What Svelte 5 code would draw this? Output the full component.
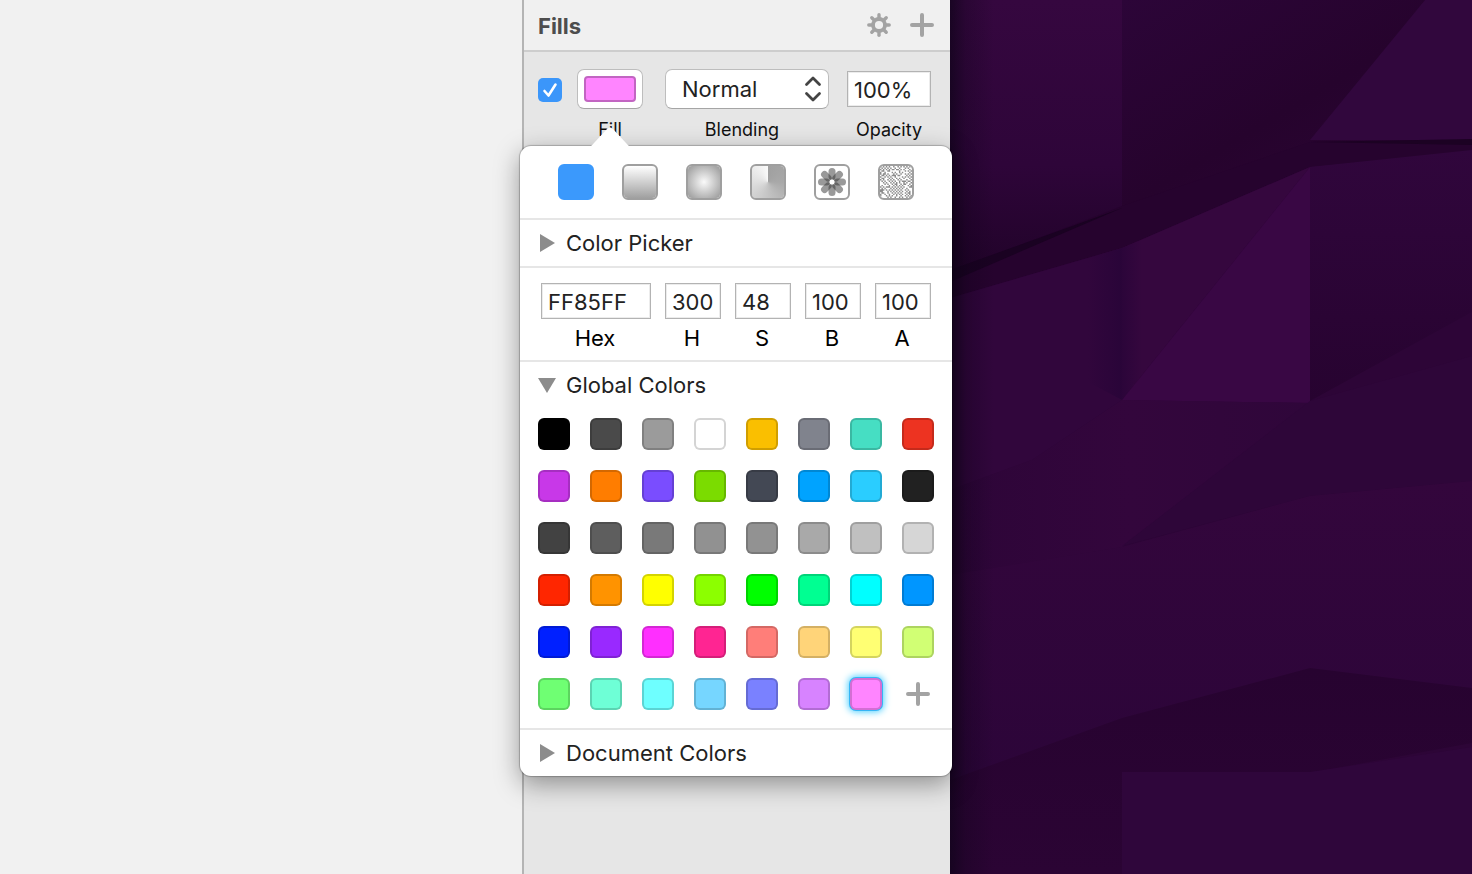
<script>
  const palette = [
    '#000000', '#4a4a4a', '#9b9b9b', '#ffffff', '#fabf00', '#80838d', '#46dec3', '#ed3321',
    '#c838e8', '#ff7d00', '#7a4dff', '#7bdc00', '#434854', '#00a3ff', '#2acdff', '#212121',
    '#424242', '#5e5e5e', '#797979', '#919191', '#929292', '#a9a9a9', '#c0c0c0', '#d6d6d6',
    '#ff2600', '#ff9300', '#ffff00', '#8cff00', '#00ff00', '#00ff92', '#00ffff', '#0096ff',
    '#0020ff', '#9929ff', '#ff2fff', '#ff2592', '#ff7e79', '#ffd479', '#ffff73', '#d1ff74',
    '#6fff73', '#6effd6', '#6effff', '#76d6ff', '#7a81ff', '#d783ff', '#ff85ff'
  ];

  let selected = $state(palette.length - 1);
  let fillEnabled = $state(true);
  let opacity = $state('100%');

  const channels = $state([
    { id: 'hex', label: 'Hex', value: 'FF85FF' },
    { id: 'hue', label: 'H', value: '300' },
    { id: 'sat', label: 'S', value: '48' },
    { id: 'bri', label: 'B', value: '100' },
    { id: 'alpha', label: 'A', value: '100' }
  ]);

  const petals = [0, 45, 90, 135, 180, 225, 270, 315];

  // Grain for the noise fill: dark cells of a 22 x 22 grid that seldom touch side by side.
  const grain = (() => {
    let seed = 7;
    let d = '';
    let above = [];
    for (let y = 0; y < 22; y++) {
      const row = [];
      for (let x = 0; x < 22; x++) {
        seed = (seed * 48271) % 2147483647;
        const touches = row[x - 1] || above[x];
        row[x] = seed / 2147483647 < (touches ? 0.14 : 0.78);
        if (row[x]) d += `M${x} ${y}h1v1h-1z`;
      }
      above = row;
    }
    return d;
  })();
</script>

{#snippet plus()}
  <svg class="icon" viewBox="0 0 24 24" aria-hidden="true">
    <path d="M12 2v20M2 12h20" fill="none" stroke="currentColor" stroke-width="4" stroke-linecap="round" />
  </svg>
{/snippet}

<div class="page">
  <main class="canvas"></main>

  <aside class="inspector">
    <header class="bar">
      <h2>Fills</h2>
      <button class="plain" aria-label="Fill settings">
        <svg class="icon" viewBox="0 0 24 24" aria-hidden="true">
          <g stroke="currentColor" stroke-width="3.4" stroke-linecap="round">
            {#each petals as a}
              <path d="M12 5V1.800" transform="rotate({a} 12 12)" />
            {/each}
          </g>
          <circle cx="12" cy="12" r="6" fill="none" stroke="currentColor" stroke-width="3.8" />
        </svg>
      </button>
      <button class="plain" aria-label="Add fill">{@render plus()}</button>
    </header>

    <section class="fill-row">
      <label class="check">
        <input type="checkbox" bind:checked={fillEnabled} aria-label="Fill enabled" />
        <svg viewBox="0 0 24 24" aria-hidden="true">
          <path d="M6.500 13l4 4.500L17.500 6.500" fill="none" stroke="#fff" stroke-width="2.600" stroke-linecap="round" stroke-linejoin="round" />
        </svg>
      </label>
      <div class="field fill">
        <button id="fill-color" class="well"><span style:background={palette[selected]}></span></button>
        <label for="fill-color">Fill</label>
      </div>
      <div class="field blending">
        <div class="select">
          <select id="blending">
            <option>Normal</option>
            <option>Darken</option>
            <option>Multiply</option>
          </select>
          <svg viewBox="0 0 18 26" aria-hidden="true">
            <path d="M2.500 8.500L9 2l6.500 6.500M2.500 17.500L9 24l6.500-6.500" fill="none" stroke="#444" stroke-width="2.800" stroke-linecap="round" stroke-linejoin="round" />
          </svg>
        </div>
        <label for="blending">Blending</label>
      </div>
      <div class="field opacity">
        <input id="opacity" class="box" type="text" bind:value={opacity} />
        <label for="opacity">Opacity</label>
      </div>
    </section>

    <div class="popover">
      <svg class="arrow" viewBox="0 0 44 20" aria-hidden="true">
        <path d="M0 20C3 20 4 18 6 16L19 2Q22 -1 25 2L38 16C40 18 41 20 44 20Z" fill="#fff" />
      </svg>

      <div class="types">
        <button class="type solid" aria-label="Solid color"></button>
        <button class="type linear" aria-label="Linear gradient"></button>
        <button class="type radial" aria-label="Radial gradient"></button>
        <button class="type angular" aria-label="Angular gradient"></button>
        <button class="type" aria-label="Pattern fill">
          <svg viewBox="0 0 32 32" aria-hidden="true">
            {#each petals as a}
              <rect x="12.500" y="2" width="7" height="12" rx="3.500" fill="#333" fill-opacity=".5" transform="rotate({a} 16 16)" />
            {/each}
            <circle cx="16" cy="16" r="2.500" fill="#fff" />
          </svg>
        </button>
        <button class="type" aria-label="Noise fill">
          <svg viewBox="0 0 22 22" aria-hidden="true">
            <path d={grain} fill="#8c8c8c" />
          </svg>
        </button>
      </div>

      <section>
        <button class="heading" aria-expanded="false">
          <svg viewBox="0 0 18 18" aria-hidden="true"><path d="M2 0l15 9L2 18z" fill="#8c8c8c" /></svg>
          Color Picker
        </button>
      </section>

      <section class="channels">
        {#each channels as c (c.id)}
          <div class="channel">
            <input id={c.id} class="box" type="text" bind:value={c.value} />
            <label for={c.id}>{c.label}</label>
          </div>
        {/each}
      </section>

      <section>
        <button class="heading" aria-expanded="true">
          <svg viewBox="0 0 18 18" aria-hidden="true"><path d="M0 2h18L9 17z" fill="#8c8c8c" /></svg>
          Global Colors
        </button>
        <div class="swatches">
          {#each palette as color, i}
            <button
              class="swatch"
              class:selected={i === selected}
              style:background-color={color}
              aria-label={color}
              onclick={() => (selected = i)}
            ></button>
          {/each}
          <button class="plain add" aria-label="Add color">{@render plus()}</button>
        </div>
      </section>

      <section>
        <button class="heading" aria-expanded="false">
          <svg viewBox="0 0 18 18" aria-hidden="true"><path d="M2 0l15 9L2 18z" fill="#8c8c8c" /></svg>
          Document Colors
        </button>
      </section>
    </div>
  </aside>

  <svg class="wallpaper" viewBox="950 0 522 874" preserveAspectRatio="none" aria-hidden="true">
    <defs>
      <linearGradient id="edge" x1="0" x2="1" y1="0" y2="0">
        <stop offset="0" stop-color="#10041a" stop-opacity=".75" />
        <stop offset=".35" stop-color="#10041a" stop-opacity=".3" />
        <stop offset="1" stop-color="#10041a" stop-opacity="0" />
      </linearGradient>
      <linearGradient id="panel" x1="0" x2="0" y1="0" y2="1">
        <stop offset="0" stop-color="#35073f" />
        <stop offset=".6" stop-color="#2e0539" />
        <stop offset="1" stop-color="#210329" />
      </linearGradient>
      <linearGradient id="fold" x1="0" x2="1" y1="0" y2="1">
        <stop offset="0" stop-color="#2c0538" />
        <stop offset=".5" stop-color="#26032d" />
        <stop offset="1" stop-color="#2d0536" />
      </linearGradient>
      <linearGradient id="right" x1="0" x2="0" y1="0" y2="1">
        <stop offset="0" stop-color="#30063c" />
        <stop offset="1" stop-color="#270330" />
      </linearGradient>
      <linearGradient id="crease" x1="0" x2="1" y1="0" y2="0">
        <stop offset="0" stop-color="#280438" stop-opacity="0" />
        <stop offset=".6" stop-color="#280438" stop-opacity=".8" />
        <stop offset="1" stop-color="#280438" stop-opacity="0" />
      </linearGradient>
      <linearGradient id="mid" x1="0" x2="1" y1="0" y2="0">
        <stop offset="0" stop-color="#2d0538" />
        <stop offset=".5" stop-color="#33063c" />
        <stop offset="1" stop-color="#2f063a" />
      </linearGradient>
      <linearGradient id="low" x1="0" x2="0" y1="0" y2="1">
        <stop offset="0" stop-color="#33063c" />
        <stop offset="1" stop-color="#2c0539" />
      </linearGradient>
      <linearGradient id="base" x1="0" x2="0" y1="0" y2="1">
        <stop offset="0" stop-color="#270330" />
        <stop offset="1" stop-color="#2b0434" />
      </linearGradient>
    </defs>
    <rect x="950" width="522" height="874" fill="#2d0537" />
    <path d="M950 0h172v208L950 275z" fill="url(#panel)" />
    <path d="M1122 0h350v140l-162 3-188 65z" fill="url(#fold)" />
    <path d="M1425 0h47v140h-162z" fill="#31073d" />
    <path d="M950 272l172-66 188-64 162-2v12l-162 15-188 81-172 50z" fill="#26032e" />
    <path d="M950 270l172-62L950 282z" fill="#1a0222" />
    <path d="M1310 142l162-3v6z" fill="#1c0223" />
    <path d="M950 298l172-50v152l-90 60-82 30z" fill="#31063c" />
    <path d="M1122 248l188-81-188 233z" fill="#35073e" />
    <path d="M1310 167v236l-188-3z" fill="#390744" />
    <path d="M1088 258l34-10 20-8v134l-20 26-34-18z" fill="url(#crease)" />
    <path d="M1310 167l162-17v162l-162 89z" fill="url(#right)" />
    <path d="M1122 400l188 3-188 144-172 28v-85l82-30z" fill="url(#mid)" />
    <path d="M1310 401l162-45v125l-162 15-188 50z" fill="#2e0639" />
    <path d="M950 575l172-28 188-51 162-15v210l-162-22-188 52-172 60z" fill="url(#low)" />
    <path d="M950 780l172-62 188-50 162 20v55l-162 30-188-1v102H950z" fill="url(#base)" />
    <path d="M1122 772h188l162-25v127h-350z" fill="#2f063b" />
    <rect x="950" width="44" height="874" fill="url(#edge)" />
  </svg>
</div>

<style>
  :global(body) {
    margin: 0;
  }

  .page {
    display: grid;
    grid-template-columns: minmax(0, 1fr) 428px minmax(0, 1fr);
    min-height: 100vh;
    font-family: Inter, 'Liberation Sans', sans-serif;
    font-size: 22px;
    color: #222;
    overflow: hidden;
  }

  button,
  input,
  select {
    box-sizing: border-box;
    margin: 0;
    padding: 0;
    font: inherit;
    color: inherit;
  }

  .canvas {
    background: #f1f1f1;
  }

  .inspector {
    position: relative;
    z-index: 1;
    border-left: 2px solid #b4b4b4;
    background: #e6e6e6;
  }

  .wallpaper {
    display: block;
    width: 100%;
    height: 100%;
  }

  .bar {
    display: flex;
    align-items: center;
    gap: 19px;
    height: 50px;
    padding: 0 16px 0 14px;
    border-bottom: 2px solid #cdcdcd;
    background: #f0f0f0;
  }

  h2 {
    flex: 1;
    margin: 0;
    padding-top: 2px;
    font-size: 22px;
    font-weight: 700;
    color: #4d4d4d;
  }

  .plain {
    display: grid;
    place-items: center;
    border: 0;
    background: none;
    color: #a3a3a3;
  }

  .icon {
    display: block;
    width: 24px;
    height: 24px;
  }

  .fill-row {
    display: flex;
    padding: 17px 19px 0 14px;
  }

  .check {
    display: grid;
    width: 24px;
    height: 24px;
    margin-top: 9px;
  }

  .check input,
  .check svg {
    grid-area: 1 / 1;
    width: 24px;
    height: 24px;
  }

  .check input {
    appearance: none;
    border-radius: 5px;
    background: #fff;
  }

  .check input:checked {
    background: #3b96fa;
  }

  .check svg {
    pointer-events: none;
  }

  .field {
    display: flex;
    flex-direction: column;
    align-items: center;
    gap: 10px;
  }

  .field label {
    font-size: 18px;
    line-height: 22px;
    color: #111;
  }

  .fill {
    width: 66px;
    margin-left: 15px;
  }

  .blending {
    flex: 1;
    margin-left: 22px;
  }

  .blending label {
    padding-right: 10px;
  }

  .opacity {
    width: 84px;
    margin-left: 18px;
  }

  .opacity .box {
    margin: 2px 0;
  }

  .well,
  .select select {
    width: 100%;
    height: 40px;
    border: 1px solid #bdbdbd;
    border-bottom-color: #a5a5a5;
    border-radius: 7px;
    background: #fff;
  }

  .well {
    padding: 6px;
  }

  .well span {
    display: block;
    box-sizing: border-box;
    height: 26px;
    border: 2px solid rgb(0 0 0 / 24%);
    border-radius: 4px;
  }

  .select {
    display: grid;
    align-items: center;
    width: 100%;
  }

  .select select,
  .select svg {
    grid-area: 1 / 1;
  }

  .select select {
    appearance: none;
    padding: 0 16px;
  }

  .select svg {
    justify-self: end;
    width: 18px;
    height: 26px;
    margin-right: 7px;
    pointer-events: none;
  }

  .box {
    width: 100%;
    height: 36px;
    padding: 2px 6px 0;
    border: 1px solid #b3b3b3;
    border-radius: 0;
    background: #fff;
    box-shadow: inset 0 0 0 1px #ececec;
  }

  .popover {
    position: absolute;
    top: 146px;
    left: -4px;
    right: -2px;
    border-radius: 11px;
    background: #fff;
    box-shadow:
      0 0 1px 1px rgb(0 0 0 / 22%),
      0 8px 26px rgb(0 0 0 / 38%);
  }

  .arrow {
    position: absolute;
    top: -19px;
    left: 68px;
    width: 44px;
    height: 20px;
  }

  .types {
    display: flex;
    justify-content: center;
    gap: 28px;
    padding: 18px 0;
  }

  .type {
    width: 36px;
    height: 36px;
    border: 2px solid #9f9f9f;
    border-radius: 6px;
    background: #fff;
    overflow: hidden;
  }

  .type svg {
    display: block;
    width: 32px;
    height: 32px;
  }

  .solid {
    border-color: #3b99fc;
    background: #3b99fc;
  }

  .linear {
    background: linear-gradient(#fff, #a0a0a0) padding-box;
  }

  .radial {
    background: radial-gradient(circle, #fafafa, #a3a3a3 20px) padding-box;
  }

  .angular {
    background: conic-gradient(#a0a0a0, #a8a8a8 90deg, #c4c4c4 180deg, #fafafa) padding-box;
  }

  section:not(.fill-row) {
    border-top: 2px solid #e6e6e6;
  }

  .heading {
    display: flex;
    align-items: center;
    gap: 10px;
    width: 100%;
    height: 46px;
    padding: 0 18px;
    border: 0;
    background: none;
    text-align: left;
  }

  .heading svg {
    width: 18px;
    height: 18px;
  }

  .channels {
    display: grid;
    grid-template-columns: minmax(0, 1fr) repeat(4, 56px);
    gap: 14px;
    padding: 15px 21px 7px;
  }

  .channel {
    display: flex;
    flex-direction: column;
    align-items: center;
    gap: 4px;
  }

  .channel label {
    padding-right: 2px;
    line-height: 30px;
    color: #000;
  }

  .swatches {
    display: grid;
    grid-template-columns: repeat(8, 32px);
    justify-content: space-between;
    gap: 20px 0;
    padding: 10px 18px 18px;
  }

  .swatch {
    width: 32px;
    height: 32px;
    border: 2px solid rgb(0 0 0 / 17%);
    border-radius: 6px;
  }

  .selected {
    box-shadow:
      0 0 0 1px #35b5f5,
      0 0 7px 2px #4fd0ff;
  }
</style>
